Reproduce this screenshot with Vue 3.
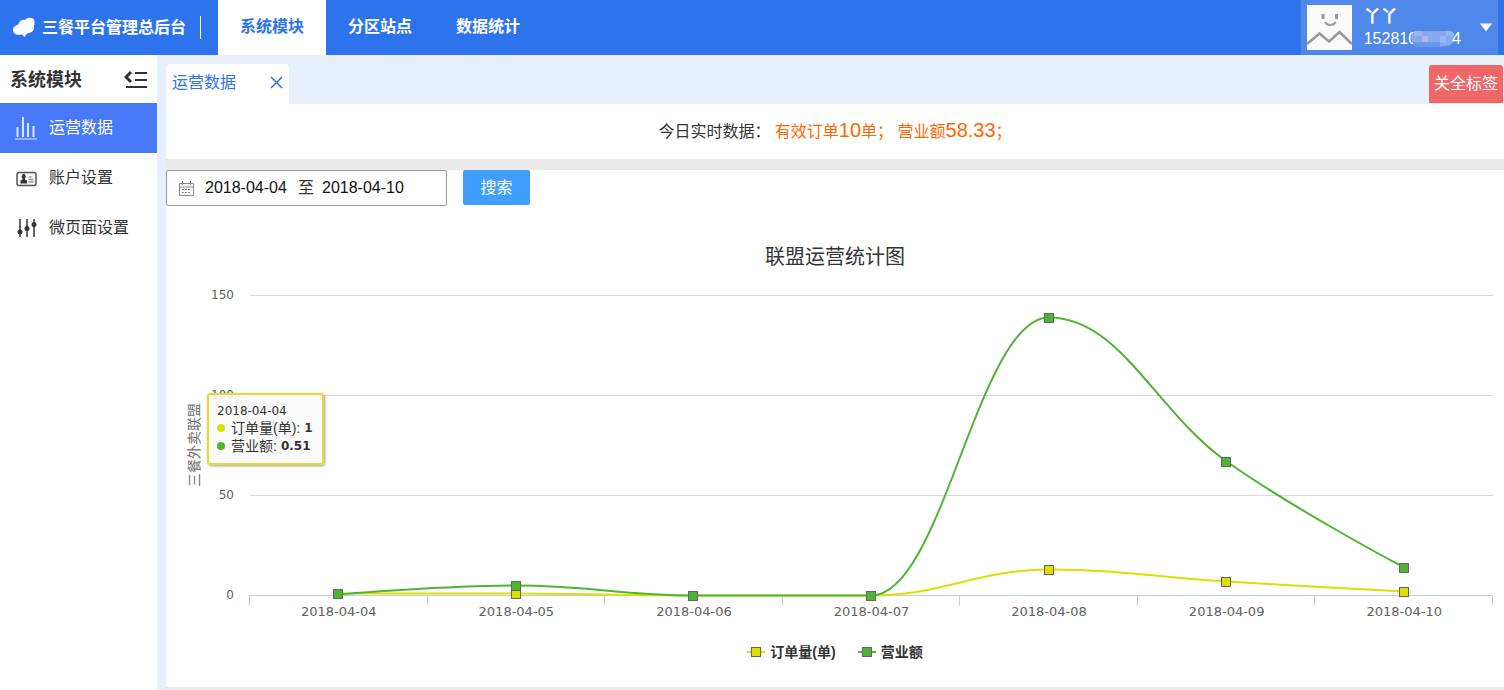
<script setup>
import { computed, onBeforeUnmount, onMounted, ref } from 'vue'

const modules = ['系统模块', '分区站点', '数据统计']
const activeModule = ref('系统模块')
const menu = [
  { name: '运营数据', icon: 'bars' },
  { name: '账户设置', icon: 'card' },
  { name: '微页面设置', icon: 'sliders' },
]
const activeMenu = ref('运营数据')
const startDate = ref('2018-04-04')
const endDate = ref('2018-04-10')

const dates = ['2018-04-04', '2018-04-05', '2018-04-06', '2018-04-07', '2018-04-08', '2018-04-09', '2018-04-10']
const series = [
  { name: '订单量(单)', color: '#dddf00', data: [1, 1, 0, 0, 13, 7, 2] },
  { name: '营业额', color: '#50b432', data: [0.51, 5, 0, 0, 139, 67, 14] },
]
const yTicks = [0, 50, 100, 150]

const plotBox = ref(null)
const width = ref(1338)
let observer
onMounted(() => {
  width.value = plotBox.value.clientWidth
  observer = new ResizeObserver(() => { width.value = plotBox.value.clientWidth })
  observer.observe(plotBox.value)
})
onBeforeUnmount(() => observer.disconnect())

const left = 84
const baseline = 323.5
const right = computed(() => width.value - 11)
const band = computed(() => (right.value - left) / dates.length)
const yOf = (v) => baseline - v * 2
const xOf = (i) => left + band.value * (i + 0.5)
const tickX = (i) => Math.round(left + band.value * i) - 0.5

// Smooth curve whose control points never overshoot the neighbouring values
function spline(points) {
  let out = null
  return points.map((p, i) => {
    if (i === 0) {
      out = { ...p }
      return `M${p.x} ${p.y}`
    }
    const last = points[i - 1]
    const next = points[i + 1]
    let l = { ...p }
    let r = { ...p }
    if (next) {
      l = { x: (1.5 * p.x + last.x) / 2.5, y: (1.5 * p.y + last.y) / 2.5 }
      r = { x: (1.5 * p.x + next.x) / 2.5, y: (1.5 * p.y + next.y) / 2.5 }
      const fix = ((r.y - l.y) * (r.x - p.x)) / (r.x - l.x) + p.y - r.y
      l.y += fix
      r.y += fix
      if (l.y > last.y && l.y > p.y) {
        l.y = Math.max(last.y, p.y)
        r.y = 2 * p.y - l.y
      } else if (l.y < last.y && l.y < p.y) {
        l.y = Math.min(last.y, p.y)
        r.y = 2 * p.y - l.y
      }
      if (r.y > next.y && r.y > p.y) {
        r.y = Math.max(next.y, p.y)
        l.y = 2 * p.y - r.y
      } else if (r.y < next.y && r.y < p.y) {
        r.y = Math.min(next.y, p.y)
        l.y = 2 * p.y - r.y
      }
    }
    const d = `C${out.x} ${out.y} ${l.x} ${l.y} ${p.x} ${p.y}`
    out = r
    return d
  }).join(' ')
}

const lines = computed(() => series.map((s) => {
  const points = s.data.map((v, i) => ({ x: xOf(i), y: yOf(v) }))
  return { ...s, points, path: spline(points) }
}))
</script>

<template>
  <div class="page">
    <header class="top">
      <div class="brand">
        <svg class="logo" viewBox="0 0 24 22" aria-hidden="true">
          <path d="M7 6C8 3 11 2 13 3C15 0 21 0 22 3C23 5 22.500 7 22 9C23 12 21 15 17 16L15 16.500L12.500 20L10 17.500C7 18 4 18 2 16C0 13 1 10 4 8.500C5 8 6.500 8 7 6Z" fill="#fff" />
        </svg>
        <h1>三餐平台管理总后台</h1>
      </div>
      <nav class="modules">
        <a v-for="m in modules" :key="m" href="#" :class="{ on: m === activeModule }" @click.prevent="activeModule = m">{{ m }}</a>
      </nav>
      <button class="user" type="button" aria-haspopup="true">
        <svg class="avatar" viewBox="0 0 45 45" aria-hidden="true">
          <rect width="45" height="45" fill="#fafafa" />
          <g fill="none" stroke="#999">
            <path d="M16 9v5M29.500 9v5" stroke-width="3" />
            <path d="M18 17c2 4 8.500 4 10.500 0" stroke-width="2" />
            <path d="M0 39L12.500 28.500L22 36.500L32.500 27L45 39" stroke-width="2.500" />
          </g>
        </svg>
        <span class="who">
          <span class="nick">丫丫</span>
          <span class="phone">152810<svg class="mask" viewBox="0 0 44 18" aria-hidden="true">
            <clipPath id="maskShape"><path d="M4 1H38C43 1 44 6 43 10C42 15 38 16 33 16L28 17H8C3 17 2 14 2 12C-1 9 0 3 4 1Z" /></clipPath>
            <g clip-path="url(#maskShape)">
              <rect width="44" height="18" fill="#86aaec" />
              <path d="M0 12h17v6H0zM17 12h12v6H17z" fill="#6796ea" />
              <path d="M11 6h6v6h-6z" fill="#a9b8ef" />
              <path d="M3 0h8v6H3zM29 6h6v6h-6zM35 0h9v6h-9z" fill="#98b6f0" />
            </g>
          </svg>4</span>
        </span>
        <svg class="caret" viewBox="0 0 14 9" aria-hidden="true"><path d="M1 .5H13L7 8.500Z" fill="#fff" /></svg>
      </button>
    </header>

    <div class="body">
      <aside class="side">
        <div class="side-head">
          <h2>系统模块</h2>
          <button type="button" aria-label="收起菜单">
            <svg viewBox="0 0 24 20" aria-hidden="true">
              <g fill="none" stroke="#333">
                <path d="M7 2L2 7L7 12" stroke-width="3" />
                <path d="M11 3H23M11 10H23M2 17H23" stroke-width="2" />
              </g>
            </svg>
          </button>
        </div>
        <nav>
          <a v-for="m in menu" :key="m.name" href="#" :class="{ on: m.name === activeMenu }" @click.prevent="activeMenu = m.name">
            <svg v-if="m.icon === 'bars'" viewBox="0 0 22 24" aria-hidden="true">
              <g fill="none" stroke="#dbe6ff" stroke-width="2"><path d="M2.500 11V21M8 1V21M13 7V21M18.500 10V21" /><path d="M0 23H22" stroke-width="1" /></g>
            </svg>
            <svg v-else-if="m.icon === 'card'" viewBox="0 0 22 24" aria-hidden="true">
              <rect x="2" y="6.500" width="19" height="13" rx="2" fill="#f7f7f7" stroke="#555" stroke-width="1.500" />
              <path d="M5.500 17.500v-3l2-1v-1a2 2.500 0 1 1 2.500 0v1l2 1v3z" fill="#333" />
              <path d="M14 11h2.500M13.500 13.500h5M13.500 16h5" fill="none" stroke="#999" stroke-width="1.500" />
            </svg>
            <svg v-else viewBox="0 0 22 24" aria-hidden="true">
              <g fill="none" stroke="#666" stroke-width="2"><path d="M5 3V21M12 3V21M19 3V21" /></g>
              <g fill="#333"><circle cx="5" cy="16" r="2.500" /><circle cx="12" cy="12.500" r="2.500" /><circle cx="19" cy="8.500" r="2.500" /></g>
            </svg>
            <span>{{ m.name }}</span>
          </a>
        </nav>
      </aside>

      <main class="main">
        <div class="tabs">
          <div class="tab">
            <a href="#" @click.prevent>运营数据</a>
            <button type="button" aria-label="关闭标签">
              <svg viewBox="0 0 13 13" aria-hidden="true"><path d="M1 1L12 12M12 1L1 12" fill="none" stroke="#2d74ec" stroke-width="1.500" /></svg>
            </button>
          </div>
          <button class="close-all" type="button">关全标签</button>
        </div>

        <p class="live">今日实时数据： <span class="hot">有效订单<b>10</b>单； 营业额<b>58.33</b>；</span></p>

        <section class="panel">
          <form class="search" @submit.prevent>
            <div class="range">
              <svg viewBox="0 0 15 15" aria-hidden="true">
                <path d="M.5 2.500H14.500V14.500H.5ZM.5 6H14.500M3.500 0V4M11.500 0V4" fill="none" stroke="#888" />
                <path d="M3 8.500H12M3 11.500H12" fill="none" stroke="#888" stroke-dasharray="2 1" />
              </svg>
              <input id="from" v-model="startDate" type="text" aria-label="开始日期">
              <span>至</span>
              <input id="to" v-model="endDate" type="text" aria-label="结束日期">
            </div>
            <button type="submit">搜索</button>
          </form>

          <h2 class="chart-title">联盟运营统计图</h2>
          <div ref="plotBox" class="plot">
            <svg :width="width" height="360" role="img" aria-label="联盟运营统计图">
              <line v-for="t in yTicks.slice(1)" :key="t" :x1="left" :x2="right" :y1="yOf(t)" :y2="yOf(t)" class="grid" />
              <line :x1="left - 1" :x2="right" :y1="baseline" :y2="baseline" class="axis" />
              <line v-for="i in 8" :key="i" :x1="tickX(i - 1)" :x2="tickX(i - 1)" :y1="baseline" :y2="baseline + 10" class="axis" />
              <text v-for="t in yTicks" :key="'y' + t" x="68" :y="yOf(t) + 3" text-anchor="end" class="y-label">{{ t }}</text>
              <text v-for="(d, i) in dates" :key="d" :x="xOf(i)" y="344" text-anchor="middle" class="x-label">{{ d }}</text>
              <text transform="translate(33 173) rotate(-90)" text-anchor="middle" class="y-title">三餐外卖联盟</text>
              <g v-for="l in lines" :key="l.name">
                <path :d="l.path" :stroke="l.color" class="curve" />
                <rect v-for="(p, i) in l.points" :key="i" :x="Math.floor(p.x) - 4.5" :y="Math.round(p.y) - 4.5" width="9" height="9" :fill="l.color" class="marker" />
              </g>
            </svg>
            <div class="tip">
              <div class="tip-date">{{ dates[0] }}</div>
              <div v-for="s in series" :key="s.name" class="tip-row">
                <svg viewBox="0 0 8 8" aria-hidden="true"><circle cx="4" cy="4" r="4" :fill="s.color" /></svg>
                <span>{{ s.name }}:</span>
                <b>{{ s.data[0] }}</b>
              </div>
            </div>
          </div>
          <div class="legend">
            <button v-for="s in series" :key="s.name" type="button">
              <svg viewBox="0 0 18 12" aria-hidden="true">
                <path d="M0 6H18" :stroke="s.color" stroke-width="2" />
                <rect x="4.500" y="1.500" width="9" height="9" :fill="s.color" class="marker" />
              </svg>
              {{ s.name }}
            </button>
          </div>
        </section>
      </main>
    </div>
  </div>
</template>

<style>
body {
  margin: 0;
  background: #e8effc;
}
</style>

<style scoped>
.page {
  min-height: 100vh;
  display: flex;
  flex-direction: column;
  font: 16px/24px "Liberation Sans", "Noto Sans CJK SC", sans-serif;
  color: #333;
}
.page *,
.page {
  box-sizing: border-box;
}
h1,
h2,
p {
  margin: 0;
}
a {
  color: inherit;
  text-decoration: none;
}
button {
  padding: 0;
  border: 0;
  background: none;
  font: inherit;
  color: inherit;
  cursor: pointer;
}
svg {
  display: block;
  flex: none;
}

.top {
  display: flex;
  height: 55px;
  background: #2d74ec;
  color: #fff;
}
.brand {
  display: flex;
  align-items: center;
  gap: 6px;
  margin: 16px 17px 16px 0;
  padding: 0 14px 0 12px;
  border-right: 1px solid #fff;
}
.logo {
  width: 24px;
  height: 22px;
}
h1 {
  font-size: 16px;
}
.modules {
  display: flex;
  flex: 1;
  font-weight: bold;
}
.modules a {
  padding: 15px 22px;
}
.modules .on {
  background: #fff;
  color: #2d74ec;
}
.user {
  display: flex;
  align-items: center;
  margin-right: 6px;
  padding: 0 5px 0 6px;
  background: #4f88e8;
  text-align: left;
}
.avatar {
  width: 45px;
  height: 45px;
}
.who {
  display: flex;
  flex-direction: column;
  margin: 0 18px 0 12px;
}
.nick {
  font-weight: bold;
  font-size: 17px;
  line-height: 22px;
}
.phone {
  display: flex;
  line-height: 22px;
}
.mask {
  width: 44px;
  height: 18px;
  margin: 2px -3px 0 -6px;
}
.caret {
  width: 14px;
  height: 9px;
}

.body {
  display: flex;
  flex: 1;
}
.side {
  flex: none;
  width: 157px;
  background: #fff;
}
.side-head {
  display: flex;
  align-items: center;
  justify-content: space-between;
  height: 48px;
  padding: 2px 9px 0 10px;
}
.side-head h2 {
  font-size: 18px;
}
.side-head svg {
  width: 24px;
  height: 20px;
}
.side nav a {
  display: flex;
  align-items: center;
  gap: 12px;
  height: 50px;
  padding-left: 15px;
}
.side nav svg {
  width: 22px;
  height: 24px;
}
.side nav .on {
  background: #4879f9;
  color: #fff;
}

.main {
  flex: 1;
  min-width: 0;
  margin-left: 9px;
  background: #eaeaea;
}
.tabs {
  display: flex;
  justify-content: space-between;
  height: 49px;
  padding: 9px 1px 0 0;
  background: #e8effc;
}
.tab {
  display: flex;
  align-items: center;
  gap: 34px;
  padding: 0 6px 3px;
  border-radius: 4px 4px 0 0;
  background: #fff;
  color: #2d74ec;
}
.tab svg {
  width: 13px;
  height: 13px;
}
.close-all {
  margin: 1px 0;
  padding: 0 5px;
  border-radius: 3px 3px 0 0;
  background: #f06767;
  color: #fff;
}
.live {
  margin-bottom: 11px;
  padding: 13px 0 14px;
  background: #fff;
  line-height: 27px;
  text-align: center;
}
.hot {
  color: #f60;
}
.hot b {
  font-weight: normal;
  font-size: 20px;
}

.panel {
  padding-bottom: 23px;
  background: #fff;
}
.search {
  display: flex;
  gap: 16px;
}
.range {
  display: flex;
  align-items: center;
  width: 281px;
  height: 36px;
  padding-left: 12px;
  border: 1px solid #999;
  border-radius: 2px;
}
.range svg {
  width: 15px;
  height: 15px;
  margin-right: 11px;
}
.range input {
  width: 85px;
  padding: 0;
  border: 0;
  outline: 0;
  font: inherit;
  color: #111;
}
.range span {
  margin: 0 8px;
}
.search button {
  width: 67px;
  height: 35px;
  border-radius: 2px;
  background: #409eff;
  color: #fff;
}

.chart-title {
  padding-top: 36px;
  font-size: 20px;
  font-weight: normal;
  line-height: 30px;
  text-align: center;
}
.plot {
  position: relative;
  overflow: hidden;
}
.grid {
  stroke: #d8d8d8;
}
.axis {
  stroke: #c0d0e0;
}
.x-label,
.y-label {
  font-family: "DejaVu Sans", sans-serif;
  fill: #606060;
}
.x-label {
  font-size: 13px;
}
.y-label {
  font-size: 12px;
}
.y-title {
  font-size: 14px;
  fill: #707070;
}
.curve {
  fill: none;
  stroke-width: 2;
}
.marker {
  stroke: #666;
}
.tip {
  position: absolute;
  top: 121px;
  left: 41px;
  width: 117px;
  height: 72px;
  padding: 8px;
  border: 2px solid #dde02f;
  border-radius: 3px;
  background: rgba(249, 249, 249, 0.85);
  box-shadow: 1px 1px 3px rgba(0, 0, 0, 0.4);
  font-size: 14px;
  line-height: 18px;
}
.tip-date {
  font: 12px/16px "DejaVu Sans", sans-serif;
}
.tip-row {
  display: flex;
  align-items: center;
}
.tip-row svg {
  width: 8px;
  height: 8px;
  margin-right: 6px;
}
.tip-row b {
  margin-left: 4px;
  font: bold 12px/18px "DejaVu Sans", sans-serif;
}
.legend {
  display: flex;
  justify-content: center;
  gap: 22px;
  padding-top: 8px;
  font-size: 14px;
  font-weight: bold;
}
.legend button {
  display: flex;
  align-items: center;
  gap: 5px;
}
.legend svg {
  width: 18px;
  height: 12px;
}
</style>
